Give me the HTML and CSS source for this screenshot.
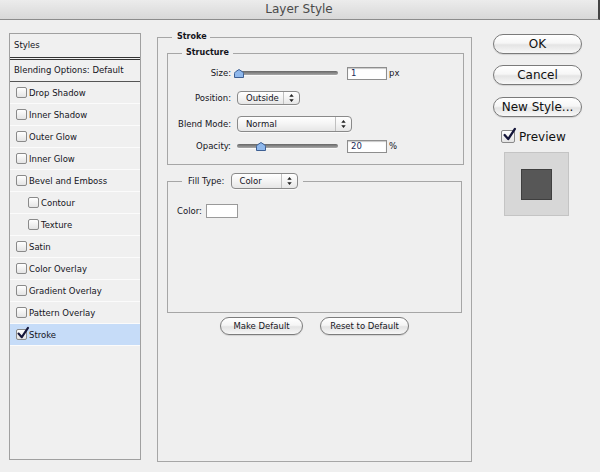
FILE: index.html
```html
<!DOCTYPE html>
<html lang="en">
<head>
    <meta charset="UTF-8">
    <meta name="viewport" content="width=device-width, initial-scale=1.0">
    <title>Layer Style</title>
    <link rel="stylesheet" href="styles.css">
</head>
<body>
    <div class="window">
        <div class="titlebar">Layer Style</div>

        <div class="main">
            <!-- effects list -->
            <div class="styles-panel">
                <div class="panel-head">Styles</div>
                <div class="panel-blend">Blending Options: Default</div>
                <ul class="style-list">
                    <li><span class="cb"></span>Drop Shadow</li>
                    <li><span class="cb"></span>Inner Shadow</li>
                    <li><span class="cb"></span>Outer Glow</li>
                    <li><span class="cb"></span>Inner Glow</li>
                    <li><span class="cb"></span>Bevel and Emboss</li>
                    <li class="sub"><span class="cb"></span>Contour</li>
                    <li class="sub"><span class="cb"></span>Texture</li>
                    <li><span class="cb"></span>Satin</li>
                    <li><span class="cb"></span>Color Overlay</li>
                    <li><span class="cb"></span>Gradient Overlay</li>
                    <li><span class="cb"></span>Pattern Overlay</li>
                    <li class="selected">
                        <span class="cb checked">
                            <svg class="tick" viewBox="0 0 12 12"><path d="M1.5 6.5 L4.8 10.2 L11 0.8"/></svg>
                        </span>Stroke
                    </li>
                </ul>
            </div>

            <!-- stroke settings -->
            <fieldset class="group group-stroke">
                <legend>Stroke</legend>

                <fieldset class="group group-structure">
                    <legend>Structure</legend>

                    <div class="row row-size">
                        <span class="label">Size:</span>
                        <div class="slider">
                            <span class="track"></span>
                            <svg class="thumb thumb-size" viewBox="0 0 10 9"><path d="M0.5 8.5 V4.5 Q0.5 3.5 1.5 2.8 L5 0.5 L8.5 2.8 Q9.5 3.5 9.5 4.5 V8.5 Z"/></svg>
                        </div>
                        <input class="num" type="text" value="1" readonly>
                        <span class="unit">px</span>
                    </div>

                    <div class="row row-position">
                        <span class="label">Position:</span>
                        <div class="select select-position">
                            <span>Outside</span>
                            <span class="arrows"><svg viewBox="0 0 5 9"><path d="M2.5 0 L5 3 H0 Z M0 6 H5 L2.5 9 Z"/></svg></span>
                        </div>
                    </div>

                    <div class="row row-blend">
                        <span class="label">Blend Mode:</span>
                        <div class="select select-blend">
                            <span>Normal</span>
                            <span class="arrows"><svg viewBox="0 0 5 9"><path d="M2.5 0 L5 3 H0 Z M0 6 H5 L2.5 9 Z"/></svg></span>
                        </div>
                    </div>

                    <div class="row row-opacity">
                        <span class="label">Opacity:</span>
                        <div class="slider">
                            <span class="track"></span>
                            <svg class="thumb thumb-opacity" viewBox="0 0 10 9"><path d="M0.5 8.5 V4.5 Q0.5 3.5 1.5 2.8 L5 0.5 L8.5 2.8 Q9.5 3.5 9.5 4.5 V8.5 Z"/></svg>
                        </div>
                        <input class="num" type="text" value="20" readonly>
                        <span class="unit">%</span>
                    </div>
                </fieldset>

                <fieldset class="group group-fill">
                    <legend>
                        <span>Fill Type:</span>
                        <span class="select select-fill">
                            <span>Color</span>
                            <span class="arrows"><svg viewBox="0 0 5 9"><path d="M2.5 0 L5 3 H0 Z M0 6 H5 L2.5 9 Z"/></svg></span>
                        </span>
                    </legend>
                    <div class="color-row">
                        <span>Color:</span>
                        <span class="swatch"></span>
                    </div>
                </fieldset>

                <div class="defaults">
                    <button class="pill pill-make">Make Default</button>
                    <button class="pill pill-reset">Reset to Default</button>
                </div>
            </fieldset>

            <!-- dialog buttons -->
            <div class="actions">
                <button class="btn-big">OK</button>
                <button class="btn-big btn-cancel">Cancel</button>
                <button class="btn-big btn-new">New Style...</button>
                <div class="preview-check">
                    <span class="cb cb-big checked">
                        <svg class="tick" viewBox="0 0 12 12"><path d="M1.5 6.5 L4.8 10.2 L11 0.8"/></svg>
                    </span>
                    Preview
                </div>
                <div class="preview-box">
                    <div class="preview-swatch"></div>
                </div>
            </div>
        </div>
    </div>
</body>
</html>
```

FILE: styles.css
```css
body {
    margin: 0;
    padding: 0;
    background-color: #efefef;
    font-family: "DejaVu Sans", "Liberation Sans", sans-serif;
    font-size: 8.5px;
    color: #14141c;
}

.window {
    width: 600px;
    height: 472px;
    overflow: hidden;
}

.titlebar {
    height: 19px;
    line-height: 19px;
    text-align: center;
    font-size: 12px;
    color: #4a4a4a;
    background: linear-gradient(#ececec, #d8d8d8);
    border-bottom: 1px solid #8c8c8c;
    border-right: 2px solid #444;
}

.main {
    display: flex;
    align-items: flex-start;
}

/* left list */
.styles-panel {
    margin: 13px 0 0 9px;
    width: 132px;
    height: 427px;
    box-sizing: border-box;
    border: 1px solid #a0a0a0;
    background-color: #f0f0f0;
}

.panel-head {
    height: 23px;
    line-height: 23px;
    padding-left: 4px;
    border-bottom: 3px double #333;
}

.panel-blend {
    height: 21px;
    line-height: 21px;
    padding-left: 4px;
    border-bottom: 1px solid #555;
}

.style-list {
    list-style: none;
    margin: 0;
    padding: 0;
}

.style-list li {
    height: 21px;
    display: flex;
    align-items: center;
    padding-left: 6px;
    border-bottom: 1px solid #fbfbfb;
}

.style-list li.sub {
    padding-left: 18px;
}

.style-list li.selected {
    background-color: #c6dcf8;
}

.cb {
    position: relative;
    width: 11px;
    height: 11px;
    box-sizing: border-box;
    margin-right: 2px;
    border: 1px solid #8a8a8a;
    border-radius: 2px;
    background: linear-gradient(#ffffff, #e4e4e4);
    flex-shrink: 0;
}

.tick {
    position: absolute;
    left: 0;
    top: -3px;
    width: 12px;
    height: 12px;
    overflow: visible;
}

.tick path {
    fill: none;
    stroke: #15163a;
    stroke-width: 2.1;
    stroke-linecap: round;
    stroke-linejoin: round;
}

/* group boxes */
.group {
    margin: 0;
    padding: 0;
    min-width: 0;
    border: 1px solid #a6a6a6;
}

.group legend {
    line-height: 12px;
    font-weight: bold;
    font-size: 8px;
}

.group-stroke {
    margin: 11px 0 0 16px;
    width: 315px;
    box-sizing: border-box;
    padding-bottom: 126px;
}

.group-stroke > legend {
    margin-left: 14px;
    padding: 0 3px 0 5px;
}

.group-structure {
    margin: 4px 7px 0 9px;
    padding-bottom: 11px;
}

.group-structure > legend {
    margin-left: 14px;
    padding: 0 4px;
}

.row {
    display: flex;
    align-items: center;
    height: 14px;
}

.row-size {
    margin-top: 7px;
}

.row-position {
    margin-top: 11px;
}

.row-blend {
    margin-top: 11px;
    height: 16px;
}

.row-opacity {
    margin-top: 7px;
}

.label {
    width: 63px;
    margin-right: 6px;
    text-align: right;
    flex-shrink: 0;
}

.slider {
    position: relative;
    width: 101px;
    height: 14px;
    margin-right: 9px;
}

.slider .track {
    position: absolute;
    left: 0;
    right: 0;
    top: 5px;
    height: 4px;
    border-radius: 2px;
    background: linear-gradient(#666, #a9a9a9);
    box-shadow: 0 1px 0 #fafafa;
}

.thumb {
    position: absolute;
    top: 3px;
    width: 10px;
    height: 9px;
}

.thumb path {
    fill: #8fb8ec;
    stroke: #3d5f93;
    stroke-width: 1;
}

.thumb-size {
    left: -3px;
}

.thumb-opacity {
    left: 19px;
}

.num {
    width: 40px;
    height: 13px;
    box-sizing: border-box;
    margin: 0;
    padding: 0 0 0 3px;
    border: 1px solid #8e8e8e;
    box-shadow: inset 0 1px 1px #c8c8c8;
    background-color: #fff;
    font-family: "DejaVu Sans", "Liberation Sans", sans-serif;
    font-size: 8.5px;
    color: #1c2a5a;
    outline: none;
}

.unit {
    margin-left: 2px;
}

.select {
    display: flex;
    align-items: center;
    height: 14px;
    box-sizing: border-box;
    padding-left: 8px;
    border: 1px solid #8a8a8a;
    border-radius: 4px;
    background: linear-gradient(#ffffff, #f4f4f4 50%, #e6e6e6);
    box-shadow: 0 1px 0 #fafafa;
    font-weight: normal;
    font-size: 8.5px;
}

.select .arrows {
    margin-left: auto;
    width: 15px;
    height: 100%;
    border-left: 1px solid #c0c0c0;
    display: flex;
    align-items: center;
    justify-content: center;
}

.select .arrows svg {
    width: 5px;
    height: 8px;
    fill: #222;
}

.select-position {
    width: 63px;
}

.select-blend {
    width: 115px;
    height: 16px;
}

.select-fill {
    width: 67px;
    height: 16px;
    padding-left: 7px;
    margin-left: 7px;
}

.group-fill {
    margin: 8px 9px 0 9px;
    padding: 0 0 94px 9px;
}

.group-fill > legend {
    display: flex;
    align-items: center;
    height: 16px;
    margin-left: 5px;
    padding: 0 5px 0 6px;
    font-weight: normal;
    font-size: 8.5px;
}

.color-row {
    display: flex;
    align-items: center;
    margin-top: 15px;
}

.swatch {
    width: 32px;
    height: 14px;
    box-sizing: border-box;
    margin-left: 4px;
    border: 1px solid #9a9a9a;
    background-color: #fff;
}

.defaults {
    display: flex;
    justify-content: center;
    gap: 17px;
    margin-top: 4px;
}

.pill {
    height: 18px;
    padding: 0;
    border: 1px solid #7c7c7c;
    border-radius: 9px;
    background: linear-gradient(#ffffff, #f5f5f5 45%, #e3e3e3 55%, #f7f7f7);
    box-shadow: 0 1px 1px rgba(0, 0, 0, 0.12);
    font-family: "DejaVu Sans", "Liberation Sans", sans-serif;
    font-size: 8.5px;
    color: #16161e;
}

.pill-make {
    width: 83px;
}

.pill-reset {
    width: 89px;
}

/* right column */
.actions {
    margin: 14px 0 0 21px;
    width: 90px;
    display: flex;
    flex-direction: column;
}

.btn-big {
    width: 89px;
    height: 20px;
    padding: 0;
    border: 1px solid #7a7a7a;
    border-radius: 10px;
    background: linear-gradient(#ffffff, #f6f6f6 45%, #e4e4e4 55%, #f8f8f8);
    box-shadow: 0 1px 1px rgba(0, 0, 0, 0.12);
    font-family: "DejaVu Sans", "Liberation Sans", sans-serif;
    font-size: 12px;
    color: #111;
}

.btn-cancel {
    margin-top: 11px;
}

.btn-new {
    margin-top: 12px;
}

.preview-check {
    display: flex;
    align-items: center;
    height: 15px;
    margin: 12px 0 0 8px;
    font-size: 12px;
    color: #111;
}

.cb-big {
    width: 14px;
    height: 13px;
    margin-right: 4px;
}

.cb-big .tick {
    left: 1px;
    top: -3px;
    width: 13px;
    height: 13px;
}

.preview-box {
    width: 65px;
    height: 64px;
    box-sizing: border-box;
    margin: 8px 0 0 11px;
    border: 1px solid #c4c4c4;
    background-color: #d7d7d7;
    display: flex;
    align-items: center;
    justify-content: center;
}

.preview-swatch {
    width: 31px;
    height: 31px;
    box-sizing: border-box;
    border: 1px solid #3f3f3f;
    background-color: #575757;
}
```
